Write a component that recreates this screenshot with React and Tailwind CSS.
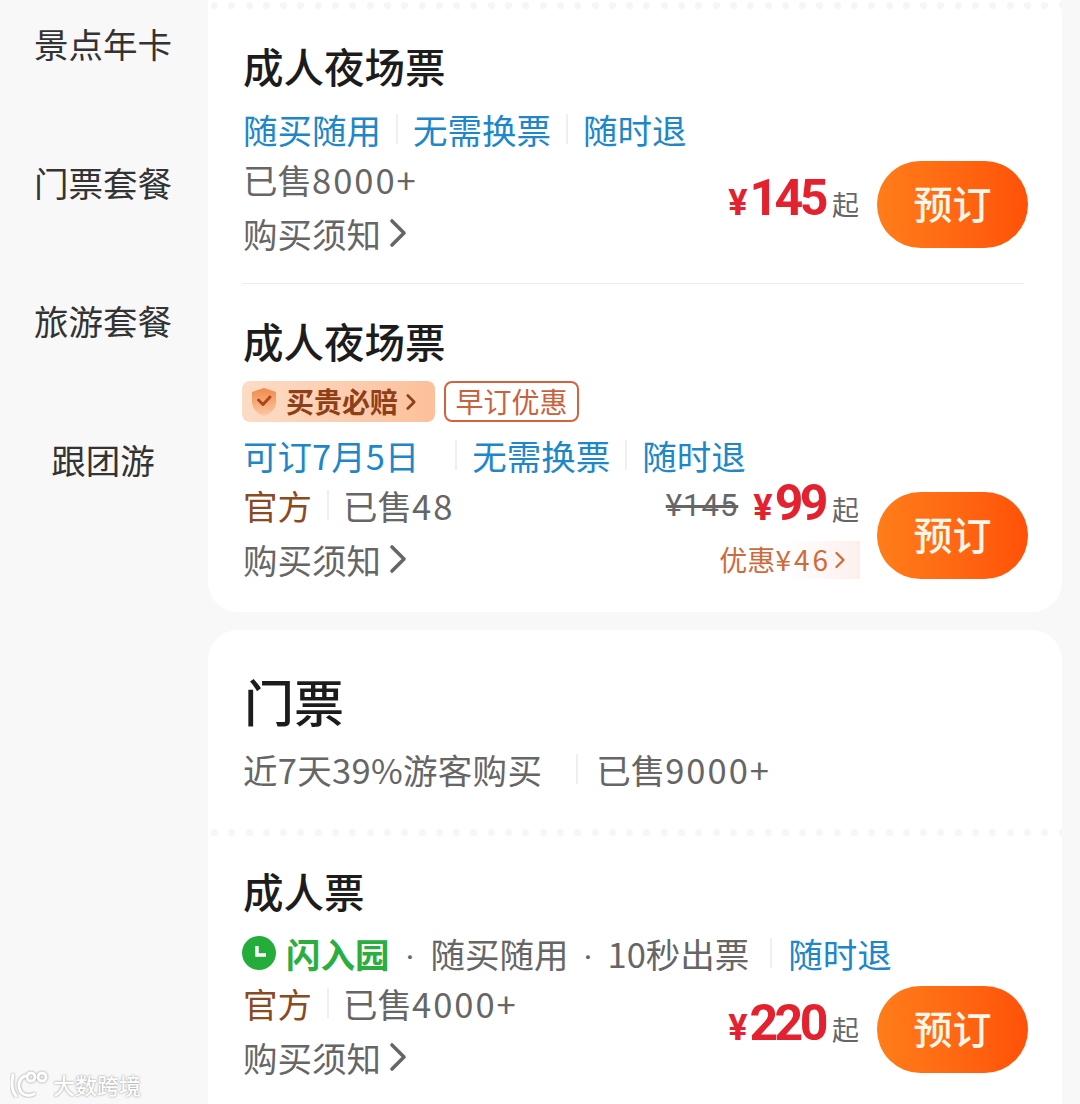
import { ChevronRight } from 'lucide-react';

const font = { fontFamily: '"Noto Sans CJK SC", "Noto Sans", sans-serif' };
const roboto = { fontFamily: 'Roboto, sans-serif' };
const navItems = ['景点年卡', '门票套餐', '旅游套餐', '跟团游'];

function Sep({ className = '' }) {
  return <span className={`w-[2px] h-[30px] bg-[#efefef] shrink-0 ${className}`} />;
}

function Dots() {
  return (
    <div className="h-[10px] flex items-center gap-[10.3px] pl-[3px] overflow-hidden">
      {Array.from({ length: 50 }).map((_, i) => (
        <span key={i} className="w-[7px] h-[7px] rounded-full bg-[#f6f6f6] shrink-0" />
      ))}
    </div>
  );
}

function Title({ children }) {
  return <div className="h-[40px] leading-[36px] text-[40.5px] text-[#1c1c1c] font-medium whitespace-nowrap">{children}</div>;
}

function Line({ children, className = '' }) {
  return <div className={`h-[36px] pb-[4px] flex items-center text-[34.5px] leading-[32px] whitespace-nowrap ${className}`}>{children}</div>;
}

function Num({ children }) {
  return <span className="tracking-[2px]">{children}</span>;
}

function MidDot({ className = '' }) {
  return <span className={`shrink-0 text-center pt-[10px] ${className}`} style={roboto}>·</span>;
}

function Notice() {
  return (
    <Line className="mt-[18px] text-[#666666]">
      购买须知
      <ChevronRight className="w-[48px] h-[48px] -my-[6px] -ml-[7px] text-[#666666] shrink-0" strokeWidth={1.8} />
    </Line>
  );
}

function Official({ sold }) {
  return (
    <Line className="mt-[14px] text-[#666666]">
      <span className="text-[#8b4a22]">官方</span>
      <Sep className="ml-[15px] mr-[14px]" />
      已售<Num>{sold}</Num>
    </Line>
  );
}

function BookButton() {
  return (
    <button className="w-[151px] h-[87px] pb-[4px] rounded-full bg-gradient-to-r from-[#ff7d1a] to-[#ff5108] text-[#fff6ea] text-[39px] font-medium shrink-0">
      预订
    </button>
  );
}

function Price({ value }) {
  return (
    <div className="flex items-baseline text-[#e4222f] font-bold whitespace-nowrap">
      <span className="text-[36px] leading-[44px]" style={roboto}>¥</span>
      <span className="text-[50px] leading-[44px] tracking-[-3.5px] ml-[2px]" style={roboto}>{value}</span>
      <span className="text-[27px] leading-[44px] text-[#666666] font-normal ml-[7px]">起</span>
    </div>
  );
}

function Shield() {
  return (
    <svg width="26" height="30" viewBox="0 0 26 30" className="shrink-0">
      <defs>
        <linearGradient id="shield" x1="0" y1="0" x2="0" y2="1">
          <stop offset="0" stopColor="#f0894a" />
          <stop offset="1" stopColor="#fbc9a4" />
        </linearGradient>
      </defs>
      <path d="M13 1 L25 5 V15 C25 22 19 27 13 29 C7 27 1 22 1 15 V5 Z" fill="url(#shield)" />
      <path d="M7.5 13 L12 17.5 L19 10" fill="none" stroke="#a8481a" strokeWidth="3" strokeLinecap="round" strokeLinejoin="round" />
    </svg>
  );
}

function Clock() {
  return (
    <svg width="34" height="34" viewBox="0 0 34 34" className="shrink-0">
      <circle cx="17" cy="17" r="17" fill="#24ad3a" />
      <path d="M15 10 V19 H24" fill="none" stroke="#ffffff" strokeWidth="3.4" />
    </svg>
  );
}

function Watermark() {
  return (
    <div className="absolute left-[10px] bottom-[6px] flex items-center gap-[3px] pointer-events-none">
      <svg width="40" height="28" viewBox="0 0 40 28">
        <g fill="none" stroke="#ffffff" strokeWidth="3" strokeLinecap="round" style={{ filter: 'drop-shadow(0 0 1px #8a8a8a)' }}>
          <path d="M3 5 C1 13 2 21 6 26" />
          <path d="M15 6 C8 9 7 18 12 23 C15 26 20 26 24 24" />
          <circle cx="21" cy="7" r="4" />
          <circle cx="32" cy="7" r="4" />
        </g>
      </svg>
      <span className="text-[22px] leading-[28px] text-white font-medium [text-shadow:0_0_2px_#7f7f7f]">大数跨境</span>
    </div>
  );
}

export default function App() {
  return (
    <div className="relative w-[1080px] h-[1104px] overflow-hidden bg-[#f8f8f8] flex" style={font}>
      <nav className="w-[208px] shrink-0 pt-[24px] flex flex-col gap-[100.5px] pr-[2px]">
        {navItems.map((item) => (
          <div key={item} className="h-[38px] leading-[38px] text-center text-[34.5px] text-[#333333]">{item}</div>
        ))}
      </nav>

      <main className="w-[854px] shrink-0 flex flex-col gap-[18px]">
        <section className="bg-white rounded-b-[30px] pb-[33px]">
          <Dots />
          <div className="pl-[35px] pr-[34px] pt-[38px] flex justify-between">
            <div className="flex-1 w-0">
              <Title>成人夜场票</Title>
              <Line className="mt-[25px] text-[#1d87c9]">
                随买随用<Sep className="mx-[15px]" />无需换票<Sep className="mx-[15px]" />随时退
              </Line>
              <Line className="mt-[14px] text-[#666666]">已售<Num>8000+</Num></Line>
              <Notice />
            </div>
            <div className="self-end mb-[5px] flex items-center gap-[18px] shrink-0">
              <div className="mb-[8px]"><Price value="145" /></div>
              <BookButton />
            </div>
          </div>

          <div className="h-px bg-[#ececec] ml-[34px] mr-[38px] mt-[30px]" />

          <div className="pl-[35px] pr-[34px] pt-[39px] flex justify-between">
            <div className="flex-1 w-0">
              <Title>成人夜场票</Title>
              <div className="mt-[18px] h-[41px] flex gap-[9px] -ml-[1px]">
                <div className="w-[193px] rounded-[8px] bg-gradient-to-r from-[#fcdcc6] to-[#fcc09a] flex items-center pl-[9px]">
                  <Shield />
                  <span className="ml-[9px] text-[28px] leading-[34px] pb-[2px] font-bold text-[#8f3f17] whitespace-nowrap">买贵必赔</span>
                  <ChevronRight className="w-[26px] h-[26px] text-[#8f3f17] shrink-0" strokeWidth={2.4} />
                </div>
                <div className="w-[135px] rounded-[8px] border-2 border-[#d3633f] flex items-center justify-center pb-[2px] text-[28px] leading-[34px] text-[#c9623c] whitespace-nowrap">
                  早订优惠
                </div>
              </div>
              <Line className="mt-[17px] text-[#1d87c9]">
                可订7月5日<Sep className="ml-[36px] mr-[15px]" />无需换票<Sep className="mx-[15px]" />随时退
              </Line>
              <Official sold="48" />
              <Notice />
            </div>
            <div className="self-end flex items-end gap-[18px] shrink-0">
              <div className="flex flex-col items-end">
                <div className="flex items-center gap-[15px]">
                  <span className="text-[31px] leading-[44px] text-[#666666] tracking-[1px] line-through" style={roboto}>¥145</span>
                  <Price value="99" />
                </div>
                <div className="mt-[10px] h-[38px] flex items-center pl-[10px] -mr-[1px] bg-gradient-to-r from-white via-white to-[#fdf0ec]">
                  <span className="text-[28px] leading-[34px] pb-[2px] text-[#cf6b3a] whitespace-nowrap">优惠<span className="tracking-[3px]">¥46</span></span>
                  <ChevronRight className="w-[28px] h-[28px] -ml-[5px] mr-[6px] text-[#cf6b3a] shrink-0" strokeWidth={2} />
                </div>
              </div>
              <BookButton />
            </div>
          </div>
        </section>

        <section className="bg-white rounded-t-[30px] flex-1 min-h-0">
          <div className="pl-[35px] pt-[45px]">
            <div className="h-[56px] pl-[1px] leading-[50px] text-[50px] font-medium text-[#1c1c1c]">门票</div>
            <Line className="mt-[22px] text-[#666666]">
              <span className="tracking-[0.3px]">近7天39%游客购买</span><Sep className="ml-[34px] mr-[18px]" />已售<Num>9000+</Num>
            </Line>
          </div>
          <div className="mt-[38px]"><Dots /></div>
          <div className="pl-[35px] pr-[34px] pt-[36px] flex justify-between">
            <div className="flex-1 w-0">
              <Title>成人票</Title>
              <Line className="mt-[24px] text-[#666666]">
                <span className="-ml-[1px] mr-[10px] flex shrink-0"><Clock /></span>
                <span className="font-bold text-[#2bae3f]">闪入园</span>
                <MidDot className="w-[41px]" />
                随买随用
                <MidDot className="w-[39px]" />
                10秒出票
                <Sep className="ml-[21px] mr-[16px]" />
                <span className="text-[#1d87c9]">随时退</span>
              </Line>
              <Official sold="4000+" />
              <Notice />
            </div>
            <div className="self-end mb-[4px] flex items-center gap-[18px] shrink-0">
              <div className="mb-[8px]"><Price value="220" /></div>
              <BookButton />
            </div>
          </div>
        </section>
      </main>

      <Watermark />
    </div>
  );
}
